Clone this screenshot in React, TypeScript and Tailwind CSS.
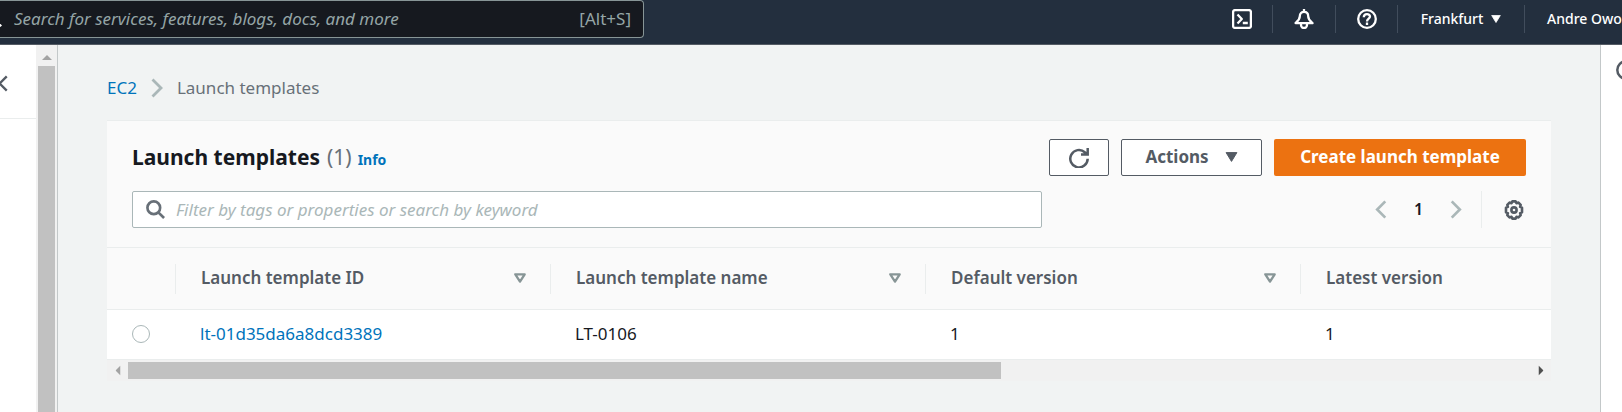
import React from 'react';

type IconProps = { className?: string };

const stroke = {
  fill: 'none',
  stroke: 'currentColor',
  strokeWidth: 2.3,
  strokeLinejoin: 'round' as const,
};

function Terminal() {
  return (
    <svg viewBox="0 0 20 20" className="size-5" {...stroke} aria-hidden="true">
      <rect x="1.1" y="1.1" width="17.8" height="17.8" rx="2" />
      <path d="M5.5 5.5 9.800 10l-4.300 4.500M10.800 14h5" />
    </svg>
  );
}

function Bell() {
  return (
    <svg viewBox="0 0 20 20" className="size-5" {...stroke} aria-hidden="true">
      <path d="M10 0v3M5.800 7.200C5.800 4.400 7.600 2.800 10 2.800s4.200 1.600 4.200 4.400c0 3.300 1.600 4.400 4.300 6.900h-17c2.700-2.500 4.300-3.600 4.300-6.900Z" />
      <path d="M7 14.500v1.500a3 3 0 0 0 6 0v-1.500" />
    </svg>
  );
}

function Help() {
  return (
    <svg viewBox="0 0 20 20" className="size-5" {...stroke} aria-hidden="true">
      <circle cx="10" cy="10" r="8.8" />
      <path d="M6.800 8.200C6.800 4.300 13 4.300 13 7.600 13 9.700 10 9.600 10 12.400M10 13.600v2.300" />
    </svg>
  );
}

function Caret({ className }: IconProps) {
  return (
    <svg viewBox="0 0 12 10" className={className} fill="currentColor" stroke="currentColor" strokeLinejoin="round" aria-hidden="true">
      <path d="M.6.6h10.800L6 9.400Z" />
    </svg>
  );
}

function SortIcon() {
  return (
    <svg viewBox="0 0 12 10" className="h-[10px] w-3 text-[#879596]" {...stroke} aria-hidden="true">
      <path d="M1.300 1.300h9.400L6 8.600Z" />
    </svg>
  );
}

function Chevron({ className }: IconProps) {
  return (
    <svg viewBox="0 0 12 20" className={className} fill="none" stroke="currentColor" strokeWidth="2.8" aria-hidden="true">
      <path d="M1.500 1.500 10 10l-8.500 8.500" />
    </svg>
  );
}

function Search({ className }: IconProps) {
  return (
    <svg viewBox="0 0 20 20" className={className} fill="none" stroke="currentColor" strokeWidth="2.8" aria-hidden="true">
      <circle cx="8.2" cy="8.2" r="6.7" />
      <path d="m13 13 6 6" />
    </svg>
  );
}

function Refresh() {
  return (
    <svg viewBox="0 0 20 20" className="size-5" fill="none" stroke="currentColor" strokeWidth="2.5" aria-hidden="true">
      <path d="M18.700 10.800A8.700 8.700 0 1 1 15.800 4.200L18.200 6.200M18.700 0v6.600h-6.700" />
    </svg>
  );
}

function Gear() {
  return (
    <svg viewBox="0 0 20 20" className="size-5" fill="none" stroke="currentColor" strokeWidth="2.6" strokeLinejoin="round" aria-hidden="true">
      <path d="M8.400 1.400h3.200l.9 1.800 2-.6 2.200 2.200-.6 2 1.900.9v4.600l-1.900.9.6 2-2.200 2.200-2-.6-.9 1.800H8.400l-.9-1.800-2 .6-2.200-2.200.6-2-1.900-.9V7.700l1.900-.9-.6-2 2.200-2.200 2 .6Z" />
      <circle cx="10" cy="10" r="2.6" />
    </svg>
  );
}

function Arrow({ className }: IconProps) {
  return (
    <svg viewBox="0 0 10 5" className={className} fill="currentColor" aria-hidden="true">
      <path d="M0 5 5 0l5 5Z" />
    </svg>
  );
}

const columns = ['Launch template ID', 'Launch template name', 'Default version', 'Latest version'];

const navCell = 'flex items-center justify-center border-r border-[#414d5c]';

function TopBar() {
  return (
    <header className="flex h-[45px] shrink-0 items-start overflow-hidden border-b border-[#545b64] bg-[#232f3e] text-white">
      <div className="flex h-[38px] w-2/5 max-w-[644px] items-center rounded-r-sm border border-l-0 border-[#879596] bg-[#16191f] pr-3 text-[17px] text-[#95a5a6]">
        <span className="flex w-[14px] shrink-0 justify-end overflow-hidden pr-3">
          <Search className="size-4 shrink-0 text-white" />
        </span>
        <input
          type="search"
          aria-label="Search services"
          placeholder="Search for services, features, blogs, docs, and more"
          className="min-w-0 flex-1 bg-transparent italic outline-none placeholder:text-[#95a5a6]"
        />
        <span>[Alt+S]</span>
      </div>
      <nav className="mt-[5px] ml-auto flex h-7 shrink-0 text-sm font-medium">
        <button type="button" aria-label="CloudShell" className={`${navCell} w-[62px]`}>
          <Terminal />
        </button>
        <button type="button" aria-label="Notifications" className={`${navCell} w-[63px]`}>
          <Bell />
        </button>
        <button type="button" aria-label="Help" className={`${navCell} w-[62px]`}>
          <Help />
        </button>
        <button type="button" className={`${navCell} w-[127px] gap-2`}>
          Frankfurt
          <Caret className="h-2 w-[10px]" />
        </button>
        <button type="button" className="w-[97px] overflow-hidden pl-[22px] text-left whitespace-nowrap">
          Andre Owo
        </button>
      </nav>
    </header>
  );
}

function SideBar() {
  return (
    <aside className="flex w-[58px] shrink-0 border-r border-[#c3c8c9] bg-white">
      <div className="flex-1">
        <div className="flex h-[74px] items-center border-b border-[#eaeded] pt-1 text-[#545b64]">
          <button type="button" aria-label="Collapse navigation" className="flex w-2 justify-end overflow-hidden">
            <Chevron className="h-[17px] w-[10px] shrink-0 rotate-180" />
          </button>
        </div>
      </div>
      <div className="flex w-[21px] flex-col items-center bg-[#f1f1f1]">
        <div className="flex h-[21px] items-center pt-1">
          <Arrow className="h-[5px] w-[10px] text-[#a3a3a3]" />
        </div>
        <div className="w-[17px] flex-1 bg-[#c1c1c1]" />
      </div>
    </aside>
  );
}

function Templates() {
  return (
    <section className="border-t border-[#eaeded] bg-[#fafafa]">
      <div className="flex flex-col gap-[15px] px-[25px] pt-[18px] pb-[19px]">
        <div className="flex items-center">
          <h1 className="flex items-baseline pb-[2px] text-[21px] leading-[30px] font-bold text-[#16191f]">
            Launch templates
            <span className="ml-[7px] font-normal text-[#687078]">(1)</span>
            <a href="#info" className="ml-[6px] text-sm font-bold text-[#0073bb]">
              Info
            </a>
          </h1>
          <div className="ml-auto flex gap-3 text-[17px] font-bold text-[#545b64]">
            <button type="button" aria-label="Refresh" className="flex h-[37px] w-[60px] items-center justify-center rounded-xs border border-[#545b64] bg-white">
              <Refresh />
            </button>
            <button type="button" className="flex h-[37px] w-[141px] items-center justify-center gap-4 rounded-xs border border-[#545b64] bg-white pb-[2px]">
              Actions
              <Caret className="h-[10px] w-[13px]" />
            </button>
            <button type="button" className="h-[37px] w-[252px] rounded-xs bg-[#ec7211] pb-[2px] text-white">
              Create launch template
            </button>
          </div>
        </div>
        <div className="flex items-center justify-between">
          <label className="flex h-[37px] w-[910px] items-center gap-[11px] rounded-xs border border-[#aab7b8] bg-white px-[13px]">
            <Search className="size-[19px] shrink-0 text-[#687078]" />
            <input
              type="search"
              aria-label="Filter templates"
              placeholder="Filter by tags or properties or search by keyword"
              className="min-w-0 flex-1 bg-transparent text-[17px] italic outline-none placeholder:text-[#aab7b8]"
            />
          </label>
          <div className="flex h-[37px] items-center text-[#aab7b8]">
            <button type="button" aria-label="Previous page">
              <Chevron className="h-[19px] w-3 rotate-180" />
            </button>
            <span className="w-[63px] pb-[2px] text-center text-base font-semibold text-[#16191f]">1</span>
            <button type="button" aria-label="Next page">
              <Chevron className="h-[19px] w-3" />
            </button>
            <span className="mr-[22px] ml-[19px] h-full w-px bg-[#eaeded]" />
            <button type="button" aria-label="Preferences" className="mr-[2px] text-[#545b64]">
              <Gear />
            </button>
          </div>
        </div>
      </div>
      <div className="overflow-hidden">
        <table className="w-[1569px] table-fixed border-collapse text-left text-[17px]">
          <thead>
            <tr className="h-[62px] border-y border-[#eaeded]">
              <th className="w-[69px] p-0">
                <div className="h-[30px] border-r border-[#eaeded]" />
              </th>
              {columns.map((name, i) => (
                <th key={name} scope="col" className="p-0 font-semibold text-[#545b64]">
                  <div className="flex h-[30px] items-center justify-between border-r border-[#eaeded] pr-6 pb-[2px] pl-[25px]">
                    {name}
                    {i < 3 && <SortIcon />}
                  </div>
                </th>
              ))}
            </tr>
          </thead>
          <tbody>
            <tr className="h-[50px] border-b border-[#eaeded] bg-white text-[#16191f]">
              <td className="px-0 pt-0 pb-[2px] pl-[25px]">
                <input
                  type="radio"
                  name="template"
                  aria-label="Select LT-0106"
                  className="block size-[18px] appearance-none rounded-full border border-[#aab7b8] bg-white"
                />
              </td>
              <td className="px-0 pt-0 pb-[2px] pl-6">
                <a href="#lt-01d35da6a8dcd3389" className="text-[#0073bb]">
                  lt-01d35da6a8dcd3389
                </a>
              </td>
              <td className="px-0 pt-0 pb-[2px] pl-6">LT-0106</td>
              <td className="px-0 pt-0 pb-[2px] pl-6">1</td>
              <td className="px-0 pt-0 pb-[2px] pl-6">1</td>
            </tr>
          </tbody>
        </table>
      </div>
      <div className="flex h-[21px] items-center bg-[#f1f1f1]">
        <div className="flex w-[21px] justify-center">
          <Arrow className="h-[5px] w-[10px] -rotate-90 text-[#a3a3a3]" />
        </div>
        <div className="flex-1">
          <div className="h-[17px] w-[62.3%] bg-[#c1c1c1]" />
        </div>
        <div className="flex w-[21px] justify-center">
          <Arrow className="h-[5px] w-[10px] rotate-90 text-[#505050]" />
        </div>
      </div>
    </section>
  );
}

export default function App() {
  return (
    <div className="flex h-screen flex-col overflow-hidden bg-[#f1f3f3] font-['Noto_Sans','Open_Sans',sans-serif]">
      <TopBar />
      <div className="flex min-h-0 flex-1">
        <SideBar />
        <main className="min-w-0 flex-1 px-[49px]">
          <nav aria-label="Breadcrumb" className="flex h-[75px] items-center pt-[10px] text-[17px]">
            <a href="#ec2" className="text-[#0073bb]">
              EC2
            </a>
            <Chevron className="mx-[14px] h-5 w-3 text-[#aab7b8]" />
            <span className="text-[#687078]">Launch templates</span>
          </nav>
          <Templates />
        </main>
        <aside className="w-[22px] shrink-0 overflow-hidden border-l border-[#c3c8c9] bg-white pt-[15px] pl-[15px] text-[#545b64]">
          <svg viewBox="0 0 20 20" className="h-5 w-5" fill="none" stroke="currentColor" strokeWidth="2.5" aria-hidden="true">
            <circle cx="10" cy="10" r="8.7" />
            <path d="M10 9v6M10 5v2" />
          </svg>
        </aside>
      </div>
    </div>
  );
}
